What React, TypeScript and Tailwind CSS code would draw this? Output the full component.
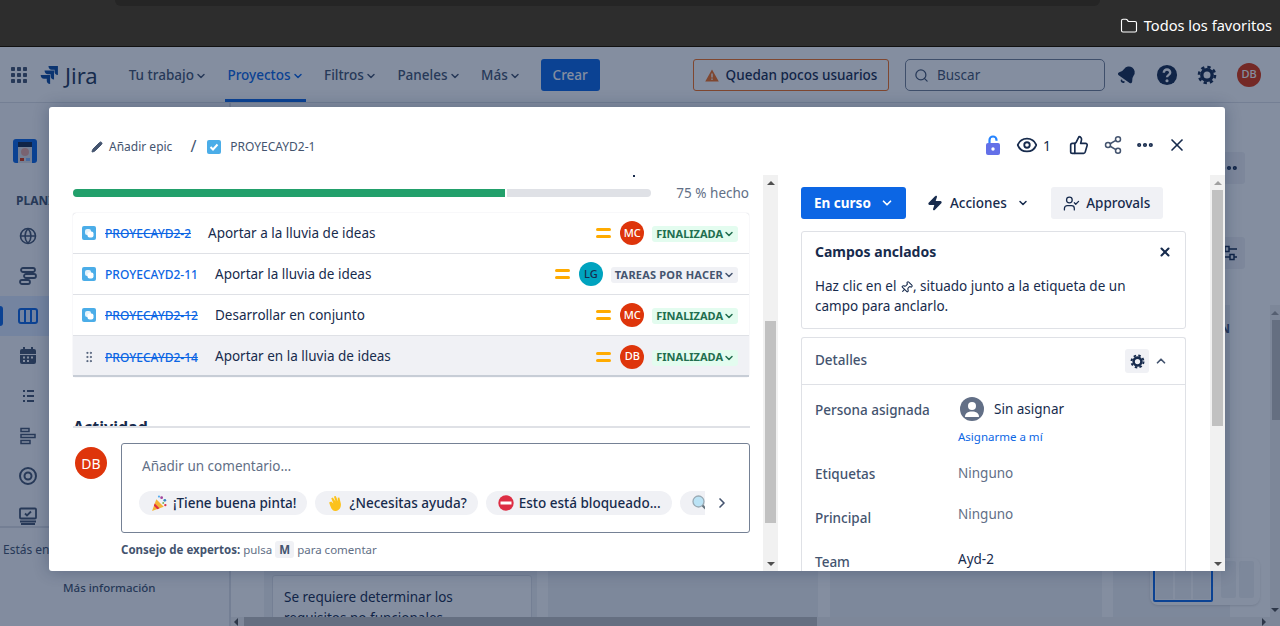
import React from 'react';
import { ChevronDown, ChevronUp, ChevronRight, Folder, Search, Bell, Pencil, Eye, ThumbsUp, Share2, MoreHorizontal, X, Zap, UserCheck, Pin, GripVertical } from 'lucide-react';

const font = "font-['Noto_Sans','Liberation_Sans',sans-serif]";

function Avatar({ text, bg, fg }: { text: string; bg: string; fg: string }) {
  return (
    <span className={`flex h-6 w-6 items-center justify-center rounded-full text-[11px] font-medium ${bg} ${fg}`}>{text}</span>
  );
}

function JiraLogo() {
  return (
    <svg width="19" height="20" viewBox="0 0 18 19" fill="#0c4a9e">
      <path d="M8 1h9v8.500c-2 0-3.200-1.200-3.200-3V4.600h-2.600C9.400 4.600 8 3 8 1z" />
      <path d="M4.300 5.200h9v8.600c-2 0-3.200-1.300-3.200-3.100V8.800H7.500C5.700 8.800 4.300 7.200 4.300 5.200z" />
      <path d="M.6 9.500h9v8.600c-2 0-3.200-1.300-3.200-3.100V13H3.800C2 13 .6 11.500.6 9.500z" />
    </svg>
  );
}

function Gear({ size, color }: { size: number; color: string }) {
  return (
    <svg width={size} height={size} viewBox="0 0 20 20" fill="none" stroke={color}>
      <circle cx="10" cy="10" r="5.200" strokeWidth="3.400" />
      <circle cx="10" cy="10" r="8" strokeWidth="2.600" strokeDasharray="3.300 3" />
    </svg>
  );
}

function HelpIcon() {
  return (
    <svg width="22" height="22" viewBox="0 0 24 24">
      <circle cx="12" cy="12" r="11" fill="#172b4d" />
      <path d="M8.500 9.500a3.500 3.500 0 117 0c0 2.300-3.500 2.500-3.500 5" fill="none" stroke="#fff" strokeWidth="2.600" />
      <circle cx="12" cy="18.300" r="1.700" fill="#fff" />
    </svg>
  );
}

function OpenLock() {
  return (
    <svg width="16" height="20" viewBox="0 0 16 20">
      <path d="M4.500 9V5a3.500 3.500 0 017 0v.8" fill="none" stroke="#2684ff" strokeWidth="2.200" />
      <rect x="1" y="8" width="14" height="12" rx="2" fill="#6370e8" />
      <circle cx="8" cy="14" r="1.700" fill="#fff" />
    </svg>
  );
}

function SubtaskIcon() {
  return (
    <svg width="14" height="14" viewBox="0 0 14 14" className="shrink-0">
      <rect width="14" height="14" rx="2" fill="#4bade8" />
      <rect x="3" y="3" width="6" height="6" rx="2" fill="#fff" opacity=".85" />
      <rect x="5.500" y="5.500" width="6" height="6" rx="2" fill="#fff" />
    </svg>
  );
}

function ProjectIcon() {
  return (
    <svg width="24" height="24" viewBox="0 0 24 24" className="ml-[13px] mt-[36px]">
      <rect width="24" height="24" rx="3" fill="#0c66e4" />
      <rect x="5" y="3" width="14" height="21" fill="#dfe1e6" />
      <rect x="5" y="3" width="14" height="5" fill="#172b4d" />
      <circle cx="12" cy="13" r="4" fill="#e8a9a0" />
      <rect x="7" y="19" width="4" height="3" fill="#de350b" />
      <rect x="13" y="19" width="4" height="3" fill="#85b8ff" />
    </svg>
  );
}

function Priority() {
  return (
    <span className="flex w-[15px] flex-col gap-[4px]">
      <span className="h-[3px] rounded-full bg-[#ffab00]" />
      <span className="h-[3px] rounded-full bg-[#ffab00]" />
    </span>
  );
}

const rows = [
  { key: 'PROYECAYD2-2', title: 'Aportar a la lluvia de ideas', done: true, user: 'MC', keyW: 'w-[103px]' },
  { key: 'PROYECAYD2-11', title: 'Aportar la lluvia de ideas', done: false, user: 'LG', keyW: 'w-[110px]' },
  { key: 'PROYECAYD2-12', title: 'Desarrollar en conjunto', done: true, user: 'MC', keyW: 'w-[110px]' },
  { key: 'PROYECAYD2-14', title: 'Aportar en la lluvia de ideas', done: true, user: 'DB', keyW: 'w-[110px]', hover: true },
];

function IssueRow({ row }: { row: (typeof rows)[number] }) {
  return (
    <div className={`flex h-[41px] items-center border-b border-[#dfe1e6] pl-[9px] pr-[11px] last:border-b-0 last:shadow-[inset_0_-2px_0_#c7cdd6] ${row.hover ? 'bg-[#f0f1f5]' : ''}`}>
      {row.hover ? (
        <span className="flex w-[14px] justify-center"><GripVertical size={14} strokeWidth={1.600} className="text-[#42526e]" /></span>
      ) : (
        <SubtaskIcon />
      )}
      <span className={`ml-[9px] pt-[2px] text-[12px] font-medium text-[#0c66e4] ${row.keyW} ${row.done ? 'line-through' : ''}`}>{row.key}</span>
      <span className="text-[13.5px] text-[#172b4d]">{row.title}</span>
      <span className="ml-auto flex items-center">
        <Priority />
        <span className="ml-[9px]">
          {row.user === 'LG' ? <Avatar text="LG" bg="bg-[#00a3bf]" fg="text-[#172b4d]" /> : <Avatar text={row.user} bg="bg-[#de350b]" fg="text-white" />}
        </span>
        {row.done ? (
          <span className="ml-2 mt-[2px] flex h-4 items-center rounded-[3px] bg-[#e3fcef] pl-1 pr-[3px] text-[11px] font-bold text-[#216e4e]">
            FINALIZADA<ChevronDown size={12} strokeWidth={3} />
          </span>
        ) : (
          <span className="ml-2 mt-[2px] flex h-4 items-center rounded-[3px] bg-[#f0f1f5] pl-1 pr-[3px] text-[11px] font-bold tracking-[0.2px] text-[#44546f]">
            TAREAS POR HACER<ChevronDown size={12} strokeWidth={3} />
          </span>
        )}
      </span>
    </div>
  );
}

function ScrollBar({ thumb, arrow }: { thumb: string; arrow: string }) {
  return (
    <div className="flex w-[15px] shrink-0 flex-col bg-[#f1f1f1]">
      <div className="flex h-[15px] items-center justify-center"><span className={`h-0 w-0 border-x-[4px] border-b-[4px] border-x-transparent ${arrow}`} /></div>
      <div className="flex-1 px-[2px]"><div className={`bg-[#c1c1c1] ${thumb}`} /></div>
      <div className="flex h-[15px] items-center justify-center"><span className="h-0 w-0 border-x-[4px] border-t-[4px] border-x-transparent border-t-[#505050]" /></div>
    </div>
  );
}

function Party() {
  return (
    <svg width="17" height="17" viewBox="0 0 16 16">
      <path d="M1 15l4-11 7 7z" fill="#f5b335" />
      <path d="M3.500 8l4.500 4.500-2 .8-3.300-3.300z" fill="#dd2e44" />
      <circle cx="10" cy="2.500" r="1.300" fill="#a0459f" /><circle cx="13" cy="5" r="1.300" fill="#3b88c3" />
      <circle cx="13.500" cy="9.500" r="1.100" fill="#dd2e44" /><circle cx="7.500" cy="1.500" r="1" fill="#55acee" /><circle cx="11.500" cy="7.500" r=".9" fill="#77b255" />
    </svg>
  );
}

function Wave() {
  return (
    <svg width="17" height="17" viewBox="0 0 16 16">
      <path d="M2 7l2-1 2 2-2-5 1.500-.7L8 6 6.500 1.500 8.200 1 10.500 6 10 2.500l1.600-.2L13 8c.5 3-1 6.800-5 7-3 .2-4-2-6-8z" fill="#fcc21b" />
    </svg>
  );
}

function NoEntry() {
  return (
    <svg width="16" height="16" viewBox="0 0 16 16">
      <circle cx="8" cy="8" r="7.700" fill="#dd2e44" /><rect x="2.500" y="6.500" width="11" height="3" fill="#fff" />
    </svg>
  );
}

function Glass() {
  return (
    <svg width="16" height="16" viewBox="0 0 16 16">
      <circle cx="6.500" cy="6.500" r="5.500" fill="#bbe3f5" stroke="#9aaab4" strokeWidth="1.300" />
      <path d="M10.500 10.500L15 15" stroke="#66757f" strokeWidth="2.200" />
    </svg>
  );
}

function Chip({ icon, text }: { icon: React.ReactNode; text: string }) {
  return (
    <span className="flex h-6 shrink-0 items-center gap-[5px] rounded-full bg-[#f0f1f5] pl-3 pr-[11px] text-[13.5px] font-medium text-[#172b4d]">
      {icon}{text}
    </span>
  );
}

function NavItem({ text, active }: { text: string; active?: boolean }) {
  return (
    <span className={`relative flex h-full items-center gap-[1px] px-[2px] pt-[2px] text-[13.5px] font-medium ${active ? 'text-[#0c66e4]' : 'text-[#44546f]'}`}>
      {text}<ChevronDown size={12} strokeWidth={3} />
      {active && <span className="absolute inset-x-0 bottom-0 h-[3px] bg-[#0c66e4]" />}
    </span>
  );
}

function SideIcon({ active, children }: { active?: boolean; children: React.ReactNode }) {
  return (
    <div className={`relative flex h-10 w-full shrink-0 items-center pl-[18px] ${active ? 'bg-[#deebff]' : ''}`}>
      {active && <span className="absolute left-0 top-[10px] h-5 w-[3px] rounded-r-sm bg-[#0c66e4]" />}
      {children}
    </div>
  );
}

function Field({ label, labelClass, valueClass, h, children }: { label: string; labelClass: string; valueClass: string; h: string; children: React.ReactNode }) {
  return (
    <div className={`flex ${h}`}>
      <span className={`w-[143px] shrink-0 text-[13.5px] font-medium text-[#44546f] ${labelClass}`}>{label}</span>
      <div className={`text-[13.5px] ${valueClass}`}>{children}</div>
    </div>
  );
}

export default function App() {
  return (
    <div className={`flex h-screen w-full flex-col overflow-hidden ${font}`}>
      {/* barra de favoritos del navegador */}
      <div className="relative flex h-[47px] shrink-0 items-center justify-end border-b border-[#111] bg-[#2d2d2d] pr-[8px] pt-[6px] text-[14.6px] text-white">
        <span className="absolute left-[115px] right-[180px] top-0 h-[6px] rounded-b-lg bg-[#252525]" />
        <Folder size={18} strokeWidth={1.500} className="mr-[6px]" />
        Todos los favoritos
      </div>

      <div className="relative flex flex-1 flex-col overflow-hidden bg-white">
        {/* cabecera de Jira */}
        <header className="flex h-[56px] shrink-0 items-center border-b border-[#dfe1e6] pl-[10px] pr-[19px]">
          <svg width="18" height="18" viewBox="0 0 18 18" fill="#44546f">
            {[1, 7, 13].flatMap((y) => [1, 7, 13].map((x) => <rect key={`${x}-${y}`} x={x} y={y} width="4" height="4" rx=".8" />))}
          </svg>
          <span className="ml-[12px]"><JiraLogo /></span>
          <span className="ml-[6px] text-[22px] leading-none text-[#253858]">Jira</span>
          <nav className="ml-[29px] flex h-full items-center gap-[16.5px]">
            <NavItem text="Tu trabajo" />
            <NavItem text="Proyectos" active />
            <NavItem text="Filtros" />
            <NavItem text="Paneles" />
            <NavItem text="Más" />
          </nav>
          <button className="ml-[18px] h-8 w-[59px] rounded-[3px] bg-[#0c66e4] pt-[1px] text-[13.5px] font-medium text-white">Crear</button>
          <div className="ml-auto flex h-8 w-[196px] items-center justify-center gap-[7px] rounded-[3px] border border-[#f5701e] pt-[1px] text-[13.5px] font-medium text-[#172b4d]">
            <svg width="14" height="13" viewBox="0 0 14 13"><path d="M7 .5L13.800 12.500H.2z" fill="#f5701e" /><rect x="6.300" y="4.500" width="1.400" height="4" fill="#fff" /><rect x="6.300" y="9.500" width="1.400" height="1.400" fill="#fff" /></svg>
            Quedan pocos usuarios
          </div>
          <div className="ml-[16px] flex h-8 w-[200px] items-center gap-[8px] rounded-[5px] border border-[#758195] pl-[8px] pt-[1px] text-[13.5px] text-[#44546f]">
            <Search size={15} />Buscar
          </div>
          <Bell size={20} fill="#172b4d" className="ml-[12px] rotate-[35deg] text-[#172b4d]" />
          <span className="ml-[19px]"><HelpIcon /></span>
          <span className="ml-[19px]"><Gear size={20} color="#172b4d" /></span>
          <span className="ml-[20px]"><Avatar text="DB" bg="bg-[#de350b]" fg="text-white" /></span>
        </header>

        {/* pagina del tablero */}
        <div className="flex min-h-0 flex-1">
          <aside className="flex w-[231px] shrink-0 flex-col border-r-2 border-[#dfe1e6] bg-[#fafbfc]">
            <ProjectIcon />
            <div className="ml-[16px] mt-[30px] text-[12px] font-bold leading-4 text-[#44546f]">PLANIFICACIÓN</div>
            <div className="mt-[7px] flex h-[310px] flex-col overflow-hidden text-[#44546f]">
              <SideIcon><svg width="20" height="20" viewBox="0 0 20 20" fill="none" stroke="currentColor" strokeWidth="1.600"><circle cx="10" cy="10" r="7.500" /><path d="M2.500 10h15M10 2.500c-4 4.500-4 10.500 0 15M10 2.500c4 4.500 4 10.500 0 15" /></svg></SideIcon>
              <SideIcon><svg width="20" height="20" viewBox="0 0 20 20" fill="none" stroke="currentColor" strokeWidth="1.800"><rect x="3" y="2" width="14" height="4" rx="2" /><rect x="6" y="8" width="12" height="4" rx="2" /><rect x="2" y="14" width="10" height="4" rx="2" /></svg></SideIcon>
              <SideIcon active><svg width="20" height="20" viewBox="0 0 20 20" fill="none" stroke="#0c66e4" strokeWidth="2"><rect x="1" y="3" width="18" height="14" rx="2" /><path d="M7 3v14M13 3v14" /></svg></SideIcon>
              <SideIcon><svg width="20" height="20" viewBox="0 0 20 20" fill="currentColor"><path d="M2 5a2 2 0 012-2h12a2 2 0 012 2v3H2zM2 9h16v7a2 2 0 01-2 2H4a2 2 0 01-2-2z" /><rect x="5" y="1" width="2" height="3" /><rect x="13" y="1" width="2" height="3" /><g fill="#fff"><rect x="5" y="10.500" width="2" height="2" /><rect x="9" y="10.500" width="2" height="2" /><rect x="13" y="10.500" width="2" height="2" /><rect x="5" y="14" width="2" height="2" /><rect x="9" y="14" width="2" height="2" /></g></svg></SideIcon>
              <SideIcon><svg width="20" height="20" viewBox="0 0 20 20" fill="currentColor"><rect x="5" y="4" width="2" height="2" /><rect x="9" y="4" width="7" height="2" /><rect x="5" y="9" width="2" height="2" /><rect x="9" y="9" width="7" height="2" /><rect x="5" y="14" width="2" height="2" /><rect x="9" y="14" width="7" height="2" /></svg></SideIcon>
              <SideIcon><svg width="20" height="20" viewBox="0 0 20 20" fill="none" stroke="currentColor" strokeWidth="1.500"><path d="M3 2.500h8v3H3zM3 8.500h14v3H3zM3 14.500h9v3H3z" /></svg></SideIcon>
              <SideIcon><svg width="20" height="20" viewBox="0 0 20 20" fill="none" stroke="currentColor" strokeWidth="2"><circle cx="10" cy="10" r="8" /><circle cx="10" cy="10" r="3.500" /></svg></SideIcon>
              <SideIcon><svg width="20" height="20" viewBox="0 0 20 20" fill="none" stroke="currentColor" strokeWidth="1.800"><rect x="2" y="2.500" width="16" height="10" rx="1" /><path d="M7 7.500l2 2 4-4M2 15.500h16M3 18h14" /></svg></SideIcon>
            </div>
            <div className="border-t-2 border-[#dfe1e6] pl-[3px] pt-[14px] text-[12px] leading-4 text-[#44546f]">Estás en un proyecto</div>
            <div className="ml-[63px] mt-[22px] text-[11.5px] font-medium leading-4 text-[#44546f]">Más información</div>
          </aside>

          <main className="flex min-w-0 flex-1 flex-col">
            <div className="flex h-[202px] shrink-0 flex-col items-end pr-[35px]">
              <span className="mt-[49px] flex h-8 w-8 items-center justify-center rounded-[3px] bg-[#f0f1f5]"><MoreHorizontal size={20} strokeWidth={3} className="text-[#172b4d]" /></span>
              <span className="mt-[53px] flex h-8 w-8 items-center justify-center rounded-[3px] bg-[#f0f1f5]">
                <svg width="18" height="18" viewBox="0 0 18 18" fill="none" stroke="#172b4d" strokeWidth="1.500"><path d="M1 5h4M9 5h8M1 13h9M14 13h3" /><rect x="5" y="2.500" width="4" height="5" /><rect x="10" y="10.500" width="4" height="5" /></svg>
              </span>
            </div>
            <div className="flex min-h-0 flex-1 overflow-hidden">
              <div className="ml-[33px] h-[400px] w-[273px] shrink-0 bg-[#f1f2f4] pl-[8px] pt-[270px]">
                <div className="h-[120px] w-[260px] rounded-[3px] border border-[#dfe1e6] bg-white pl-[11px] pr-[60px] pt-[11px] text-[13.5px] leading-[21px] text-[#172b4d]">Se requiere determinar los requisitos no funcionales</div>
              </div>
              <div className="ml-[11px] w-[270px] shrink-0 bg-[#f1f2f4]" />
              <div className="ml-[12px] w-[272px] shrink-0 bg-[#f1f2f4]" />
              <div className="ml-[11px] w-[117px] shrink-0 bg-[#f1f2f4] pt-[15px] text-right text-[12px] font-bold text-[#44546f]">N</div>
              <div className="ml-auto flex w-[10px] shrink-0 flex-col bg-[#f1f1f1]">
                <div className="flex h-[15px] items-center justify-center"><span className="h-0 w-0 border-x-[4px] border-b-[4px] border-x-transparent border-b-[#a0a0a0]" /></div>
                <div className="ml-[2px] h-[100px] bg-[#c1c1c1]" />
                <div className="mt-auto flex h-[15px] items-center justify-center"><span className="h-0 w-0 border-x-[4px] border-t-[4px] border-x-transparent border-t-[#505050]" /></div>
              </div>
            </div>
            <div className="flex h-[9px] shrink-0 items-center bg-[#f1f1f1]">
              <span className="ml-[3px] h-0 w-0 border-y-[4px] border-r-[4px] border-y-transparent border-r-[#505050]" />
              <div className="ml-[6px] h-full w-[573px] bg-[#c1c1c1]" />
              <span className="ml-[445px] h-0 w-0 border-y-[4px] border-l-[4px] border-y-transparent border-l-[#505050]" />
            </div>
          </main>
        </div>

        {/* minimapa del tablero */}
        <div className="absolute bottom-[21px] right-[20px] flex h-[47px] w-[110px] gap-[2px] rounded-[8px] bg-white p-[3px] shadow-sm">
          <div className="flex w-[60px] shrink-0 gap-[2px] rounded-[2px] border-2 border-[#0c66e4] p-[1px]">
            <span className="flex-1 bg-[#f1f2f4]" /><span className="flex-1 bg-[#f1f2f4]" /><span className="flex-1 bg-[#f1f2f4]" />
          </div>
          <span className="mb-[4px] ml-[6px] w-[15px] rounded-[2px] bg-[#f1f2f4]" />
          <span className="mb-[4px] ml-[1px] w-[15px] rounded-[2px] bg-[#f1f2f4]" />
        </div>

        {/* velo del modal */}
        <div className="absolute inset-0 bg-[#091e4280]" />

        {/* modal de la incidencia */}
        <div className="absolute left-[49px] top-[60px] flex h-[464px] w-[1176px] flex-col rounded-[3px] bg-white text-[#172b4d] shadow-[0_0_16px_rgba(9,30,66,0.3)]">
          <div className="flex h-[68px] shrink-0 items-end pb-[19px] pl-[42px] pr-[38px]">
            <Pencil size={12} fill="#44546f" className="mb-[3px] text-[#44546f]" />
            <span className="ml-[6px] text-[12px] text-[#44546f]">Añadir epic</span>
            <span className="ml-[18px] text-[16px] leading-5 text-[#44546f]">/</span>
            <span className="mb-[2px] ml-[11px] flex h-[14px] w-[14px] items-center justify-center rounded-[2px] bg-[#4bade8]">
              <svg width="10" height="10" viewBox="0 0 10 10" fill="none" stroke="#fff" strokeWidth="2"><path d="M1.500 5l2.500 2.500 4.500-5" /></svg>
            </span>
            <span className="ml-[9px] text-[12px] text-[#44546f]">PROYECAYD2-1</span>
            <div className="ml-auto flex items-center text-[#172b4d]">
              <OpenLock />
              <Eye size={22} strokeWidth={2} className="ml-[15px]" />
              <span className="ml-[5px] text-[14px]">1</span>
              <ThumbsUp size={20} strokeWidth={2} className="ml-[18px]" />
              <Share2 size={20} strokeWidth={1.800} className="ml-[14px] text-[#44546f]" />
              <MoreHorizontal size={20} strokeWidth={3} className="ml-[12px]" />
              <X size={20} strokeWidth={2} className="ml-[12px]" />
            </div>
          </div>

          <div className="flex min-h-0 flex-1">
            {/* columna izquierda */}
            <div className="flex w-[728px] shrink-0">
              <div className="relative w-[714px] pl-[24px] pr-[13px]">
                <span className="absolute left-[584px] top-0 h-[2px] w-[2px] bg-[#172b4d]" />
                <div className="flex h-[38px] items-center pb-[2px] pr-[1px]">
                  <div className="flex h-2 w-[578px] overflow-hidden rounded-full bg-[#dfe1e6]"><div className="w-[434px] border-r-2 border-white bg-[#22a06b]" /></div>
                  <span className="ml-auto text-[13.5px] text-[#626f86]">75 % hecho</span>
                </div>
                <div className="w-[676px] rounded-[3px] shadow-[0_0_1px_rgba(9,30,66,0.3)]">
                  {rows.map((row) => <IssueRow key={row.key} row={row} />)}
                </div>
                <div className="mt-[40px] h-[11px] overflow-hidden border-b-2 border-[#dfe1e6] text-[16px] font-bold leading-5">Actividad</div>
                <div className="mt-[15px] flex">
                  <span className="ml-[2px] mt-[4px] flex h-8 w-8 items-center justify-center rounded-full bg-[#de350b] text-[14px] text-white">DB</span>
                  <div className="ml-[14px] flex h-[90px] w-[629px] flex-col rounded-[3px] border border-[#758195] pl-[20px]">
                    <span className="mt-[12px] text-[13.5px] leading-5 text-[#626f86]">Añadir un comentario…</span>
                    <div className="-ml-[3px] mt-[15px] flex items-center">
                      <div className="flex w-[566px] gap-2 overflow-hidden">
                        <Chip icon={<Party />} text="¡Tiene buena pinta!" />
                        <Chip icon={<Wave />} text="¿Necesitas ayuda?" />
                        <Chip icon={<NoEntry />} text="Esto está bloqueado..." />
                        <Chip icon={<Glass />} text="¿Puedes aclararlo?" />
                      </div>
                      <ChevronRight size={16} strokeWidth={2.500} className="ml-[9px] text-[#44546f]" />
                    </div>
                  </div>
                </div>
                <div className="ml-[48px] mt-[8px] flex items-center text-[11.5px] text-[#626f86]">
                  <b className="font-bold text-[#44546f]">Consejo de expertos:</b>
                  <span className="ml-[3px]">pulsa</span>
                  <span className="mx-[3px] rounded-[3px] bg-[#f0f1f5] px-[4px] font-bold text-[#44546f]">M</span>
                  para comentar
                </div>
              </div>
              <ScrollBar thumb="mt-[131px] h-[202px]" arrow="border-b-[#505050]" />
            </div>

            {/* columna derecha */}
            <div className="flex min-w-0 flex-1">
              <div className="w-[433px] overflow-hidden pl-[24px] pr-[24px]">
                <div className="mt-[12px] flex h-8 items-center">
                  <button className="flex h-8 w-[105px] items-center justify-between rounded-[3px] bg-[#0c66e4] pl-[13px] pr-[12px] text-[13.5px] font-bold text-white">En curso<ChevronDown size={14} strokeWidth={3} /></button>
                  <Zap size={16} fill="#172b4d" className="ml-[21px]" />
                  <span className="ml-[7px] text-[13.5px] font-medium">Acciones</span>
                  <ChevronDown size={12} strokeWidth={3} className="ml-[10px]" />
                  <span className="ml-[22px] flex h-8 w-[112px] items-center justify-center gap-[6px] rounded-[3px] bg-[#f0f1f5] text-[13.5px] font-medium">
                    <UserCheck size={17} strokeWidth={1.800} />Approvals
                  </span>
                </div>
                <div className="mt-[12px] h-[98px] w-[385px] rounded-[3px] border border-[#dfe1e6] pl-[13px] pr-[13px]">
                  <div className="mt-[10px] flex items-center justify-between text-[14px] font-bold leading-5">Campos anclados<X size={14} strokeWidth={3.500} /></div>
                  <p className="mt-[14px] text-[13.5px] leading-5">Haz clic en el <Pin size={13} className="inline rotate-45" />, situado junto a la etiqueta de un campo para anclarlo.</p>
                </div>
                <div className="mt-[8px] w-[385px] rounded-t-[3px] border border-b-0 border-[#dfe1e6]">
                  <div className="flex h-[47px] items-center border-b border-[#dfe1e6] pl-[13px] pr-[17px] text-[13.5px] font-medium text-[#44546f]">
                    <span className="pb-[1px]">Detalles</span>
                    <span className="ml-auto flex h-6 w-6 items-center justify-center rounded-[3px] bg-[#f0f1f5]"><Gear size={15} color="#172b4d" /></span>
                    <ChevronUp size={14} strokeWidth={3} className="ml-[5px]" />
                  </div>
                  <div className="h-[200px] pl-[13px] pt-[12px]">
                    <Field label="Persona asignada" labelClass="pt-[3px]" valueClass="" h="h-[66px]">
                      <div className="flex items-center">
                        <span className="ml-[2px] flex h-6 w-6 items-center justify-center overflow-hidden rounded-full bg-[#626f86]">
                          <svg width="24" height="24" viewBox="0 0 24 24" fill="#fff"><circle cx="12" cy="9" r="4" /><path d="M5 20c0-4 3-5.500 7-5.500s7 1.500 7 5.500z" /></svg>
                        </span>
                        <span className="ml-[10px]">Sin asignar</span>
                      </div>
                      <div className="mt-[7px] text-[11.5px] text-[#0c66e4]">Asignarme a mí</div>
                    </Field>
                    <Field label="Etiquetas" labelClass="pt-[1px]" valueClass="text-[#626f86]" h="h-[44px]">Ninguno</Field>
                    <Field label="Principal" labelClass="pt-[1px]" valueClass="-mt-[3px] text-[#626f86]" h="h-[44px]">Ninguno</Field>
                    <Field label="Team" labelClass="pt-[1px]" valueClass="-mt-[2px]" h="h-[30px]">Ayd-2</Field>
                  </div>
                </div>
              </div>
              <ScrollBar thumb="h-[236px]" arrow="border-b-[#a0a0a0]" />
            </div>
          </div>
        </div>
      </div>
    </div>
  );
}
